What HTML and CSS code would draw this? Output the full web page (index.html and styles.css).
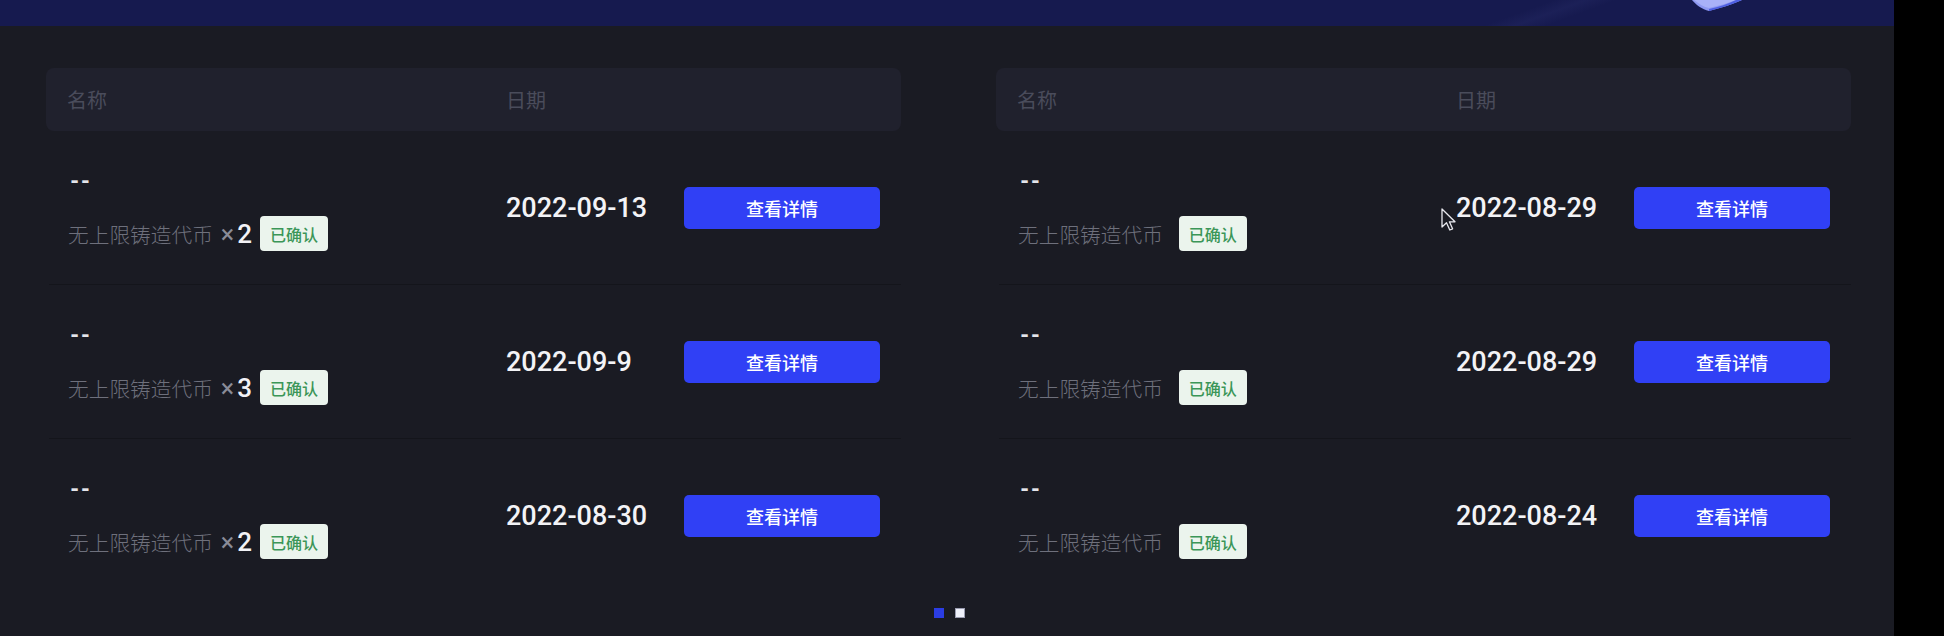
FILE: index.html
```html
<!DOCTYPE html>
<html lang="zh-CN">
<head>
<meta charset="utf-8">
<title>铸造记录</title>
<link rel="stylesheet" href="styles.css">
</head>
<body>
<div class="app">
  <div class="banner">
    <div class="banner-glow"></div>
    <svg class="shield" width="52" height="12" viewBox="0 0 52 12">
      <path d="M0 0 C4 5 10 9 17 11 C29 8 41 4 50 0 Z" fill="#8f99f2"/>
      <path d="M2 0 C7 4 12 7 17 8 C26 6 36 3 44 0 Z" fill="#a9b1f8"/>
      <path d="M17 11 C29 8 41 4 50 0 L44 0 C36 4 27 7 17 9 Z" fill="#4d5ee2"/>
    </svg>
  </div>

  <div class="content">
    <div class="panels">
      <section class="panel">
        <div class="thead"><span>名称</span><span>日期</span></div>
        <div class="row">
          <div class="name-cell">
            <div class="dash">--</div>
            <div class="sub"><span class="sub-name">无上限铸造代币</span><span class="count"><span class="x">×</span><span class="n">2</span></span><span class="tag">已确认</span></div>
          </div>
          <div class="date">2022-09-13</div>
          <button class="btn">查看详情</button>
        </div>
        <div class="row">
          <div class="name-cell">
            <div class="dash">--</div>
            <div class="sub"><span class="sub-name">无上限铸造代币</span><span class="count"><span class="x">×</span><span class="n">3</span></span><span class="tag">已确认</span></div>
          </div>
          <div class="date">2022-09-9</div>
          <button class="btn">查看详情</button>
        </div>
        <div class="row">
          <div class="name-cell">
            <div class="dash">--</div>
            <div class="sub"><span class="sub-name">无上限铸造代币</span><span class="count"><span class="x">×</span><span class="n">2</span></span><span class="tag">已确认</span></div>
          </div>
          <div class="date">2022-08-30</div>
          <button class="btn">查看详情</button>
        </div>
      </section>

      <section class="panel">
        <div class="thead"><span>名称</span><span>日期</span></div>
        <div class="row">
          <div class="name-cell">
            <div class="dash">--</div>
            <div class="sub"><span class="sub-name">无上限铸造代币</span><span class="count"></span><span class="tag">已确认</span></div>
          </div>
          <div class="date">2022-08-29</div>
          <button class="btn">查看详情</button>
        </div>
        <div class="row">
          <div class="name-cell">
            <div class="dash">--</div>
            <div class="sub"><span class="sub-name">无上限铸造代币</span><span class="count"></span><span class="tag">已确认</span></div>
          </div>
          <div class="date">2022-08-29</div>
          <button class="btn">查看详情</button>
        </div>
        <div class="row">
          <div class="name-cell">
            <div class="dash">--</div>
            <div class="sub"><span class="sub-name">无上限铸造代币</span><span class="count"></span><span class="tag">已确认</span></div>
          </div>
          <div class="date">2022-08-24</div>
          <button class="btn">查看详情</button>
        </div>
      </section>
    </div>

    <div class="pager">
      <span class="dot active"></span>
      <span class="dot"></span>
    </div>
  </div>

  <svg class="cursor" width="15" height="24" viewBox="0 0 15 24">
    <path d="M1 1 L1 19 L5.5 14.8 L8.8 22 L11.6 20.8 L8.4 13.8 L14 13.8 Z" fill="#1b1c24" stroke="#e8e8ee" stroke-width="1.3" stroke-linejoin="round"/>
  </svg>
</div>
</body>
</html>
```

FILE: styles.css
```css
* {
  box-sizing: border-box;
}

html, body {
  margin: 0;
  padding: 0;
  background: #000;
}

body {
  font-family: "Noto Sans CJK SC", "Noto Sans", sans-serif;
  width: 1944px;
  height: 636px;
  overflow: hidden;
}

.app {
  position: relative;
  width: 1894px;
  height: 636px;
  background: #1a1b23;
}

.banner {
  position: relative;
  height: 26px;
  background: #161a4f;
  overflow: hidden;
}

.banner-glow {
  position: absolute;
  left: 1480px;
  top: 0;
  width: 140px;
  height: 26px;
  background: linear-gradient(160deg, rgba(255,255,255,0) 35%, rgba(120,130,220,0.06) 50%, rgba(255,255,255,0) 65%);
}

.shield {
  position: absolute;
  left: 1692px;
  top: 0;
}

.content {
  padding: 42px 42px 0 46px;
}

.panels {
  display: grid;
  grid-template-columns: 855px 855px;
  column-gap: 95px;
}

.thead {
  display: grid;
  grid-template-columns: 439px 1fr;
  align-items: center;
  height: 63px;
  padding-left: 21px;
  background: #20212d;
  border-radius: 8px;
  color: #4a4c5b;
  font-size: 20px;
  font-weight: 400;
}

.row {
  display: grid;
  grid-template-columns: 438px 178px 196px;
  align-items: center;
  height: 154px;
  margin-left: 3px;
  padding-left: 19px;
  border-bottom: 1px solid #14151b;
}

.row:last-child {
  border-bottom-color: transparent;
}

.name-cell {
  align-self: start;
  display: flex;
  flex-direction: column;
  padding-top: 39px;
}

.dash {
  height: 24px;
  line-height: 24px;
  font-family: "Liberation Mono", monospace;
  font-weight: 700;
  font-size: 22px;
  letter-spacing: -2.5px;
  color: #e4e4ea;
}

.sub {
  display: flex;
  align-items: center;
  gap: 8px;
  height: 35px;
  margin-top: 22px;
}

.sub-name {
  font-size: 20.7px;
  font-weight: 300;
  color: #6e707c;
  white-space: nowrap;
}

.count {
  display: flex;
  align-items: baseline;
  gap: 3px;
  font-family: Roboto, sans-serif;
}

.count .x {
  font-size: 25px;
  color: #8a8c98;
}

.count .n {
  font-size: 26px;
  font-weight: 500;
  color: #f2f2f6;
}

.tag {
  display: inline-flex;
  align-items: center;
  justify-content: center;
  width: 68px;
  height: 35px;
  border-radius: 4px;
  background: #ebf4ed;
  color: #3b9658;
  font-size: 16px;
  font-weight: 500;
}

.date {
  font-family: Roboto, sans-serif;
  font-size: 27px;
  font-weight: 500;
  color: #f3f3f6;
}

.btn {
  width: 196px;
  height: 42px;
  border: 0;
  border-radius: 5px;
  background: #3040f5;
  color: #ffffff;
  font-family: "Noto Sans CJK SC", sans-serif;
  font-size: 18px;
  font-weight: 500;
  padding: 0;
  cursor: pointer;
}

.pager {
  display: flex;
  justify-content: center;
  gap: 11px;
  margin-top: 15px;
}

.dot {
  width: 10px;
  height: 10px;
  background: #eef0fa;
  border: 1px solid #9a9cb0;
}

.dot.active {
  background: #2b3de3;
  border-color: #2b3de3;
}

.cursor {
  position: absolute;
  left: 1441px;
  top: 208px;
}
```
